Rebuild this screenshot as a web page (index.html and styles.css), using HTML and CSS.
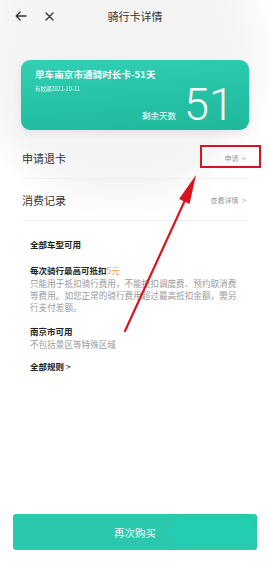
FILE: index.html
```html
<!DOCTYPE html>
<html lang="zh">
<head>
<meta charset="utf-8">
<link rel="stylesheet" href="styles.css">
</head>
<body>
<div class="page">
  <header class="topbar">
    <div class="nav">
      <svg class="ico" width="12" height="10" viewBox="0 0 12 10"><path d="M11 5H1.5M5 1L1.2 5L5 9" fill="none" stroke="#333" stroke-width="1.3" stroke-linecap="round" stroke-linejoin="round"/></svg>
      <svg class="ico x" width="9" height="9" viewBox="0 0 9 9"><path d="M1 1L8 8M8 1L1 8" fill="none" stroke="#333" stroke-width="1.3" stroke-linecap="round"/></svg>
    </div>
    <div class="title">骑行卡详情</div>
    <div class="nav"></div>
  </header>

  <section class="card">
    <div class="card-name">单车南京市通骑时长卡-51天</div>
    <div class="card-date">有效期2021-10-11</div>
    <div class="card-bottom">
      <span class="remain-label">剩余天数</span>
      <span class="remain-num">51</span>
    </div>
  </section>

  <div class="rows">
    <div class="row">
      <span class="row-label">申请退卡</span>
      <span class="row-link">申请 <span class="chev">&gt;</span></span>
    </div>
    <div class="row">
      <span class="row-label">消费记录</span>
      <span class="row-link">查看详情 <span class="chev">&gt;</span></span>
    </div>
  </div>

  <div class="rules">
    <div class="rule-title first">全部车型可用</div>
    <div class="rule-title">每次骑行最高可抵扣<span class="orange">5元</span></div>
    <p class="rule-text">只能用于抵扣骑行费用，不能抵扣调度费、预约取消费等费用。如您正常的骑行费用超过最高抵扣金额，需另行支付差额。</p>
    <div class="rule-title">南京市可用</div>
    <p class="rule-text">不包括景区等特殊区域</p>
    <div class="rule-title all">全部规则 <span class="chev-b">&gt;</span></div>
  </div>

  <div class="spacer"></div>

  <div class="btn-wrap">
    <button class="buy">再次购买</button>
  </div>

  <div class="redbox"></div>
  <svg class="arrow" width="270" height="563" viewBox="0 0 270 563">
    <line x1="125" y1="331" x2="186" y2="198" stroke="#d9141c" stroke-width="2.2" stroke-linecap="round"/>
    <polygon points="196,175 189.5,204 179,199" fill="#d9141c"/>
  </svg>
  <div class="blob"></div>
</div>
</body>
</html>
```

FILE: styles.css
```css
* { box-sizing: border-box; }
html, body { margin: 0; padding: 0; }
body {
  width: 270px;
  height: 563px;
  overflow: hidden;
  font-family: "Noto Sans CJK SC", "Noto Sans", sans-serif;
  color: #333;
  background: #fff;
}
.page {
  position: relative;
  width: 270px;
  height: 563px;
  display: flex;
  flex-direction: column;
  background:
    radial-gradient(circle at 120px 60px, #f3f3f3 0, #f5f5f5 120px, rgba(255,255,255,0) 160px),
    #fff;
}
.topbar {
  height: 32px;
  display: grid;
  grid-template-columns: 70px 1fr 70px;
  align-items: center;
  padding: 0 0 0 15px;
}
.nav { display: flex; align-items: center; }
.ico { display: block; }
.ico.x { margin-left: 18px; }
.title {
  text-align: center;
  font-size: 11px;
  color: #333;
  margin-left: -15px;
}
.card {
  margin: 28px 21px 0;
  height: 70px;
  border-radius: 9px;
  background: linear-gradient(175deg, #33d0b6 0%, #27c4a8 45%, #1fb89b 100%);
  box-shadow: 0 3px 8px rgba(0,0,0,0.08);
  padding: 7px 14px 0 14px;
  color: #fff;
  display: flex;
  flex-direction: column;
}
.card-name {
  font-size: 9.5px;
  font-weight: bold;
  line-height: 14px;
  letter-spacing: 0.1px;
}
.card-date {
  font-size: 5.5px;
  line-height: 8px;
  margin-top: 4px;
  opacity: 0.9;
}
.card-bottom {
  display: flex;
  justify-content: flex-end;
  align-items: flex-end;
  margin-top: -9px;
}
.remain-label {
  font-size: 8.5px;
  line-height: 12px;
  margin-bottom: 5px;
  margin-right: 8px;
}
.remain-num {
  font-family: "Roboto", "Liberation Sans", sans-serif;
  font-weight: 300;
  font-size: 45px;
  line-height: 42px;
  margin-right: 1px;
}
.rows {
  margin: 7px 22px 0;
}
.row {
  height: 42px;
  display: flex;
  align-items: center;
  justify-content: space-between;
  border-bottom: 1px solid #f0f0f0;
}
.row-label {
  font-size: 11px;
  color: #333;
}
.row-link {
  font-size: 7px;
  color: #999;
  margin-right: 2px;
}
.chev { color: #aaa; font-size: 7px; margin-left: 2px; }
.rules {
  padding: 0 30px;
}
.rule-title {
  font-size: 8.5px;
  font-weight: bold;
  color: #222;
  line-height: 12px;
  margin-top: 12px;
}
.rule-title.first { margin-top: 17px; }
.rule-title + .rule-title { margin-top: 14px; }
.orange { color: #e4a64e; font-weight: normal; }
.rule-text {
  margin: 1px 0 0;
  font-size: 8.6px;
  line-height: 12px;
  color: #9a9a9a;
  width: 210px;
}
.rule-title.all { margin-top: 10px; }
.chev-b { font-weight: normal; }
.spacer { flex: 1; }
.btn-wrap {
  padding: 0 13px 13px;
}
.buy {
  display: block;
  width: 100%;
  height: 36px;
  border: 0;
  border-radius: 3px;
  background: #2ac9ae;
  color: #e9fbf7;
  font-family: "Noto Sans CJK SC", sans-serif;
  font-size: 10.5px;
  padding: 0;
}
.redbox {
  position: absolute;
  left: 200px;
  top: 145px;
  width: 61px;
  height: 23px;
  border: 2px solid #d9141c;
}
.arrow {
  position: absolute;
  left: 0;
  top: 0;
}
.blob {
  position: absolute;
  left: 172px;
  top: 519px;
  width: 82px;
  height: 27px;
  border-radius: 8px;
  background: #22cdb0;
  filter: blur(1.5px);
}
```
